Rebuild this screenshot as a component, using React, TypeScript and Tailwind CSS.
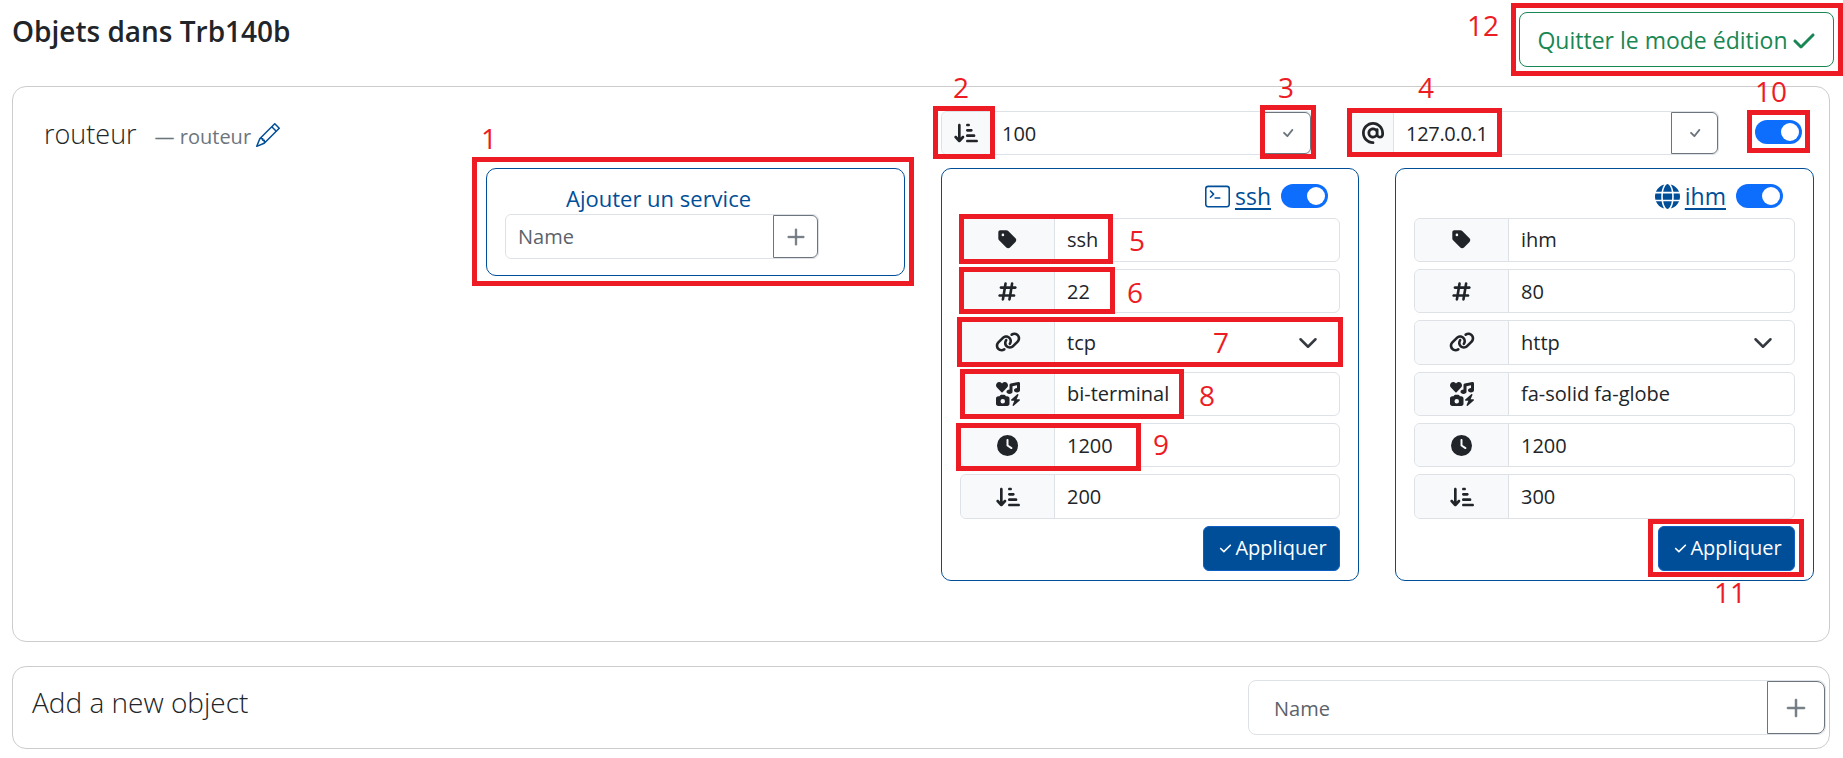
import React from "react";
import { FaArrowDownShortWide, FaTag, FaHashtag, FaLink, FaIcons, FaClock, FaAt, FaCheck, FaGlobe } from "react-icons/fa6";
import { BsPencil, BsTerminal, BsPlusLg, BsCheck } from "react-icons/bs";

function Toggle() {
  return (
    <div className="flex h-[24px] w-[47px] items-center justify-end rounded-full bg-[#0d6efd] px-[3px]">
      <div className="h-[18px] w-[18px] rounded-full bg-white" />
    </div>
  );
}

function Chevron() {
  return (
    <svg viewBox="0 0 16 16" className="h-[20px] w-[20px]" fill="none" stroke="#343a40" strokeWidth="2" strokeLinecap="round" strokeLinejoin="round">
      <path d="m2 5 6 6 6-6" />
    </svg>
  );
}

function Row({ icon, value, select }: { icon: React.ReactNode; value: string; select?: boolean }) {
  return (
    <div className="flex h-[44.4px] items-stretch rounded-[6px] border border-[#dee2e6] text-[20px] text-[#212529]">
      <div className="flex w-[94px] shrink-0 items-center justify-center rounded-l-[6px] border-r border-[#dee2e6] bg-[#f8f9fa]">{icon}</div>
      <div className="flex flex-1 items-center justify-between pl-[12px] pr-[21px] pt-[1px]">
        <span>{value}</span>
        {select && <Chevron />}
      </div>
    </div>
  );
}

function ServiceCard({ icon, name, values, proto, width }: { icon: React.ReactNode; name: string; values: string[]; proto: string; width: string }) {
  return (
    <div className={`flex h-[413px] ${width} flex-col rounded-[10px] border border-[#004e98] px-[18px] pt-[15px]`}>
      <div className="flex h-[24px] items-center justify-end gap-[10px] pr-[12px] text-[23px] text-[#004e98]">
        <div className="flex items-center gap-[5px]">
          {icon}
          <span className="underline underline-offset-[3px]">{name}</span>
        </div>
        <Toggle />
      </div>
      <div className="mt-[9.5px] flex flex-col gap-[7px]">
        <Row icon={<FaTag className="text-[21px]" />} value={values[0]} />
        <Row icon={<FaHashtag className="text-[21px]" />} value={values[1]} />
        <Row icon={<FaLink className="text-[26px]" />} value={proto} select />
        <Row icon={<FaIcons className="text-[24px]" />} value={values[2]} />
        <Row icon={<FaClock className="text-[21px]" />} value={values[3]} />
        <Row icon={<FaArrowDownShortWide className="text-[24px]" />} value={values[4]} />
      </div>
      <div className="mt-[7px] flex justify-end">
        <button className="flex h-[45px] w-[137px] items-center justify-center gap-[3px] rounded-[6px] border border-[#0d5fc4] bg-[#004e98] pl-[3px] text-[20px] text-white">
          <FaCheck className="text-[13px]" />
          Appliquer
        </button>
      </div>
    </div>
  );
}

function CheckBtn() {
  return (
    <div className="flex w-[47px] shrink-0 items-center justify-center rounded-r-[6px] border border-[#6c757d] text-[#6c757d]">
      <BsCheck className="text-[20px]" />
    </div>
  );
}

const num = "absolute text-[28px] leading-none text-[#ed1c24]";
const box = "absolute border-[5px] border-[#ed1c24]";

export default function App() {
  return (
    <div className="relative h-[758px] w-[1843px] overflow-hidden bg-white font-['Open_Sans',sans-serif] text-[#212529]">
      <header className="flex items-start justify-between pl-3 pr-[9px] pt-[12px]">
        <h1 className="mt-[1px] text-[28px] font-semibold leading-[36px]">Objets dans Trb140b</h1>
        <button className="flex h-[55px] w-[315px] items-center justify-center gap-[4px] rounded-[8px] border border-[#198754] pt-[2px] text-[23px] text-[#198754]">
          Quitter le mode édition
          <FaCheck className="text-[24px]" />
        </button>
      </header>

      <section className="mx-3 mt-[19px] flex h-[556px] w-[1818px] rounded-[14px] border border-[#cccccc]">
        <div className="flex w-[473px] shrink-0 items-baseline pl-[31px] pt-[25px]">
          <span className="text-[27px] font-light leading-[44px] text-[#212529]">routeur</span>
          <span className="ml-[18px] text-[20px] text-[#6c757d]">— routeur</span>
          <BsPencil className="ml-[5px] translate-y-[3px] text-[24px] text-[#004e98]" />
        </div>
        <div className="mt-[81px] flex h-[108px] w-[419px] shrink-0 flex-col rounded-[10px] border border-[#004e98] pl-[18px]">
          <div className="mt-[15px] whitespace-nowrap pl-[61px] text-[22px] leading-[28px] text-[#004e98]">Ajouter un service</div>
          <div className="mt-[2px] flex h-[45px] w-[314px] rounded-[6px] border border-[#dee2e6]">
            <div className="flex flex-1 items-center pl-[12px] text-[20px] text-[#5c636a]">Name</div>
            <div className="flex w-[45px] items-center justify-center rounded-r-[6px] border border-[#6c757d] text-[#6c757d]">
              <BsPlusLg className="text-[22px]" stroke="currentColor" strokeWidth="0.6" />
            </div>
          </div>
        </div>
        <div className="ml-[36px] flex flex-col pt-[24px]">
          <div className="flex h-[44px] items-stretch">
            <div className="flex w-[371px] rounded-[6px] border border-[#dee2e6] text-[20px]">
              <div className="flex w-[47px] items-center justify-center rounded-l-[6px] bg-[#f8f9fa]"><FaArrowDownShortWide className="text-[24px]" /></div>
              <div className="flex flex-1 items-center pl-[13px] pt-[2px]">100</div>
              <CheckBtn />
            </div>
            <div className="ml-[39px] flex w-[368px] rounded-[6px] border border-[#dee2e6] text-[20px]">
              <div className="flex w-[42px] items-center justify-center rounded-l-[6px] border-r border-[#dee2e6] bg-[#f8f9fa] text-[22px]"><FaAt /></div>
              <div className="flex flex-1 items-center pl-[12px] pt-[2px] tracking-[-0.3px]">127.0.0.1</div>
              <CheckBtn />
            </div>
            <div className="ml-[36px] flex items-center pb-[3px]"><Toggle /></div>
          </div>
          <div className="mt-[13px] flex gap-[36px]">
            <ServiceCard width="w-[418px]" icon={<BsTerminal className="text-[25px]" />} name="ssh" proto="tcp" values={["ssh", "22", "bi-terminal", "1200", "200"]} />
            <ServiceCard width="w-[419px]" icon={<FaGlobe className="text-[25px]" />} name="ihm" proto="http" values={["ihm", "80", "fa-solid fa-globe", "1200", "300"]} />
          </div>
        </div>
      </section>

      <section className="mx-3 mt-[24px] flex h-[83px] w-[1818px] items-center justify-between rounded-[14px] border border-[#cccccc] pl-[19px] pr-[3px]">
        <span className="mb-[12px] text-[28px] font-light text-[#212529]">Add a new object</span>
        <div className="flex h-[55px] w-[578px] rounded-[8px] border border-[#dee2e6]">
          <div className="flex flex-1 items-center pl-[25px] pt-[2px] text-[20px] text-[#5c636a]">Name</div>
          <div className="flex w-[58px] items-center justify-center rounded-r-[8px] border border-[#6c757d] text-[#6c757d]">
            <BsPlusLg className="text-[24px]" stroke="currentColor" strokeWidth="0.6" />
          </div>
        </div>
      </section>

      {/* annotations drawn over the screenshot */}
      <div className={`${box} left-[472px] top-[157px] h-[129px] w-[442px]`} />
      <div className={`${box} left-[933px] top-[106px] h-[53px] w-[62px]`} />
      <div className={`${box} left-[1260px] top-[105px] h-[54px] w-[56px]`} />
      <div className={`${box} left-[1347px] top-[108px] h-[49px] w-[155px]`} />
      <div className={`${box} left-[1747px] top-[110px] h-[43px] w-[63px]`} />
      <div className={`${box} left-[1511px] top-[3px] h-[73px] w-[332px]`} />
      <div className={`${box} left-[959px] top-[214px] h-[50px] w-[154px]`} />
      <div className={`${box} left-[959px] top-[267px] h-[47px] w-[156px]`} />
      <div className={`${box} left-[957px] top-[317px] h-[50px] w-[386px]`} />
      <div className={`${box} left-[960px] top-[369px] h-[50px] w-[224px]`} />
      <div className={`${box} left-[956px] top-[423px] h-[48px] w-[185px]`} />
      <div className={`${box} left-[1648px] top-[519px] h-[58px] w-[156px]`} />
      <span className={`${num} left-[481px] top-[124px]`}>1</span>
      <span className={`${num} left-[953px] top-[73px]`}>2</span>
      <span className={`${num} left-[1278px] top-[73px]`}>3</span>
      <span className={`${num} left-[1418px] top-[73px]`}>4</span>
      <span className={`${num} left-[1129px] top-[226px]`}>5</span>
      <span className={`${num} left-[1127px] top-[278px]`}>6</span>
      <span className={`${num} left-[1213px] top-[328px]`}>7</span>
      <span className={`${num} left-[1199px] top-[381px]`}>8</span>
      <span className={`${num} left-[1153px] top-[430px]`}>9</span>
      <span className={`${num} left-[1755px] top-[77px]`}>10</span>
      <span className={`${num} left-[1714px] top-[578px]`}>11</span>
      <span className={`${num} left-[1467px] top-[11px]`}>12</span>
    </div>
  );
}
